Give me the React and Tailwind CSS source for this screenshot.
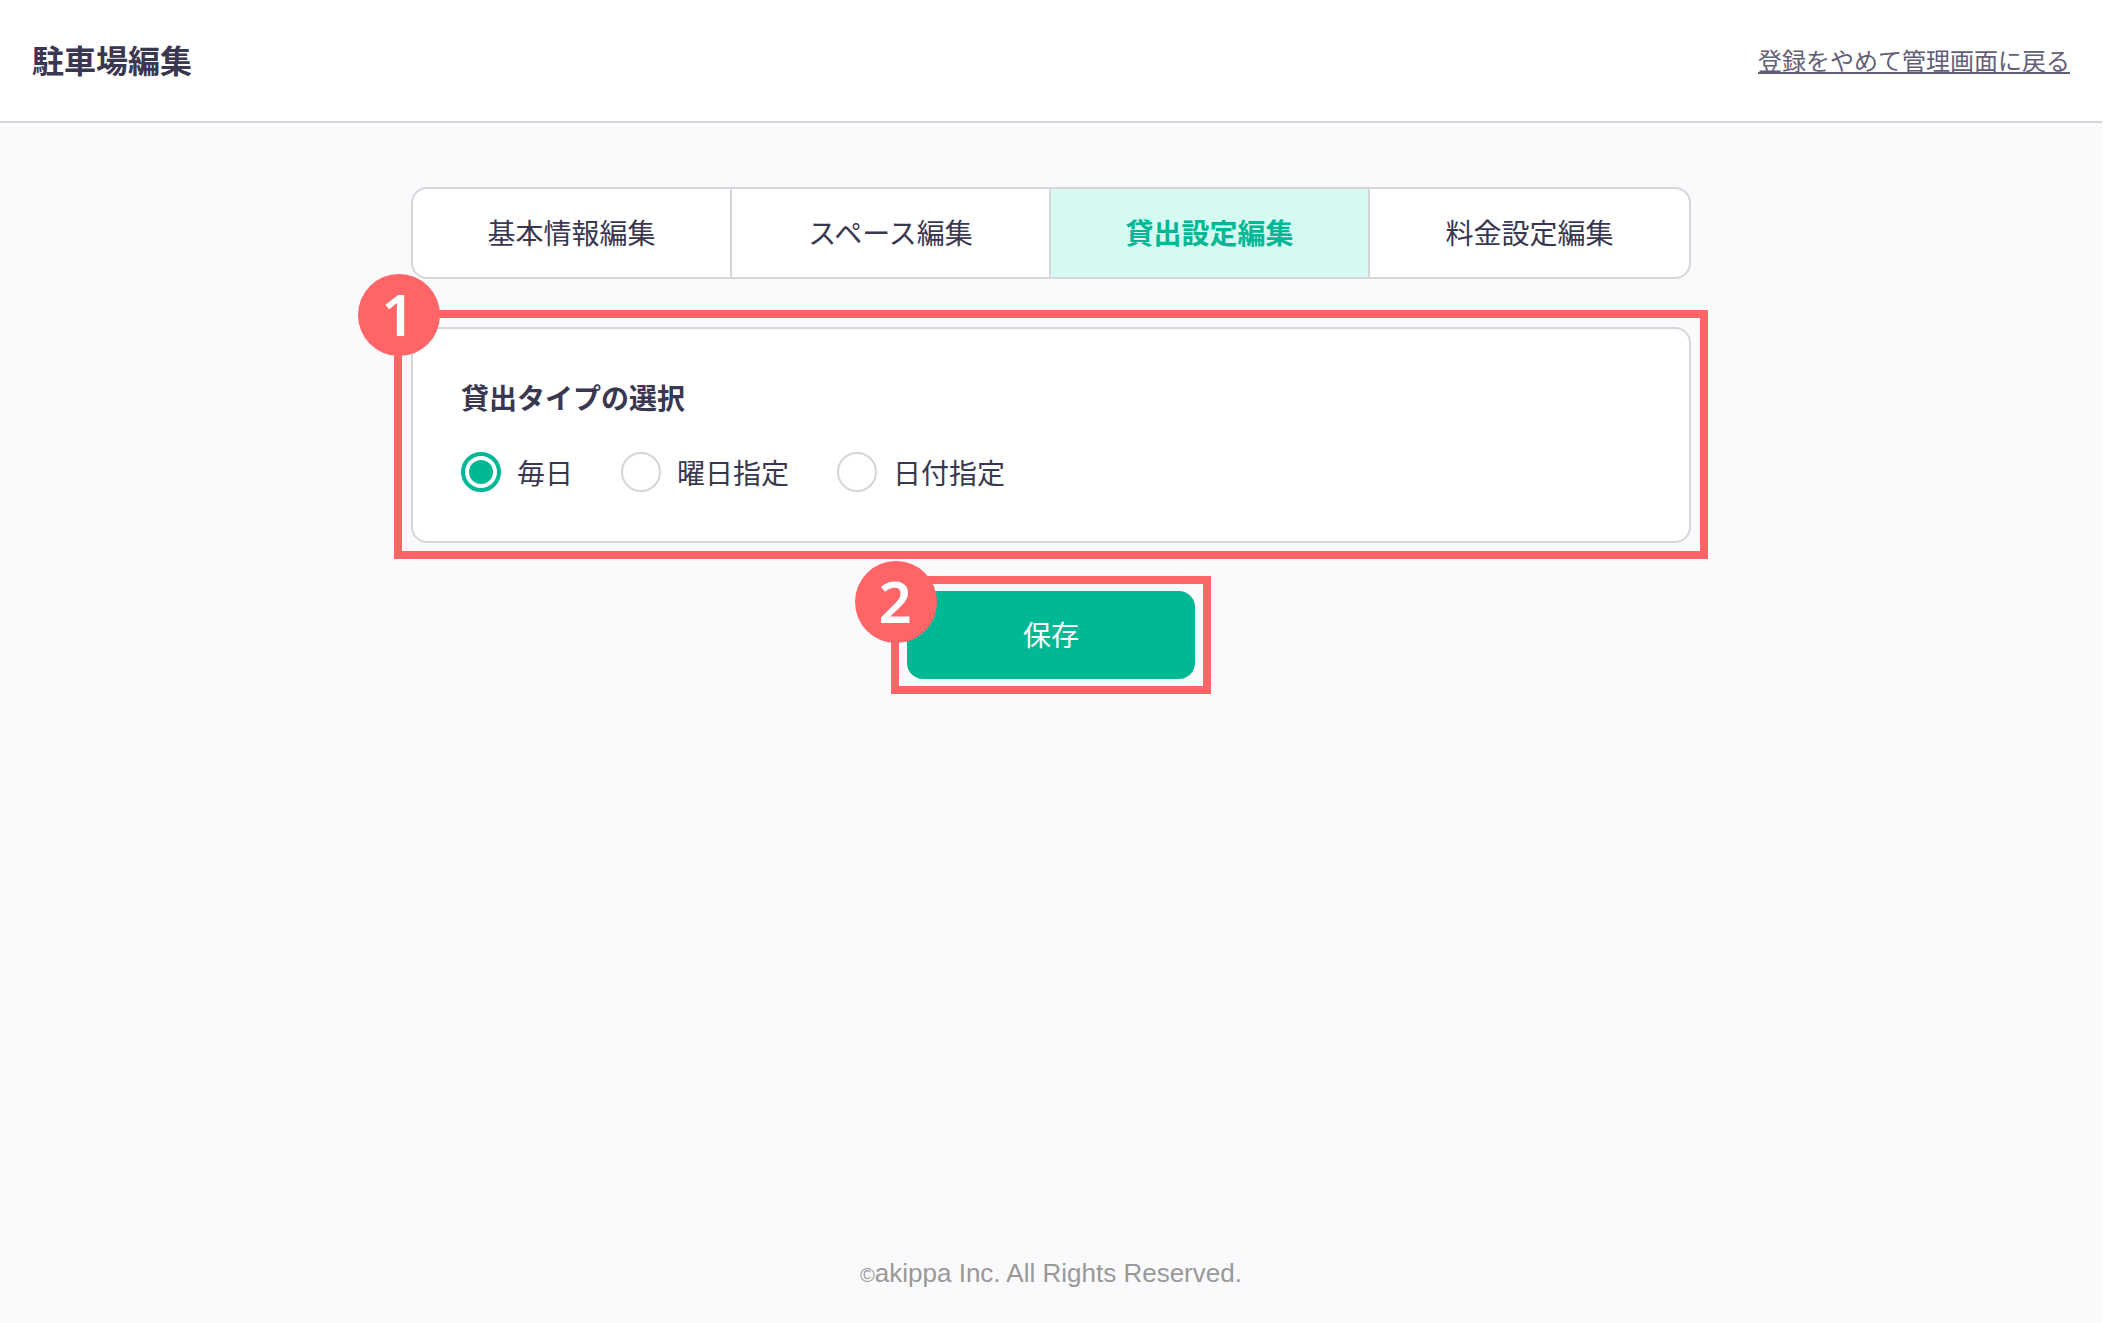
import { useState } from 'react';
import clsx from 'clsx';

const tabs = [
  { id: 'basic', label: '基本情報編集' },
  { id: 'space', label: 'スペース編集' },
  { id: 'rental', label: '貸出設定編集' },
  { id: 'price', label: '料金設定編集' },
];

const rentalTypes = [
  { value: 'everyday', label: '毎日' },
  { value: 'weekday', label: '曜日指定' },
  { value: 'date', label: '日付指定' },
];

// Red guide frame with a step number near its top left corner
const StepFrame = ({ number, className, badgeClassName }) => (
  <div className={clsx('pointer-events-none absolute border-8 border-[#ff6467]', className)}>
    <span
      className={clsx(
        "absolute -left-11 flex size-[82px] items-center justify-center rounded-full bg-[#ff6467] pr-0.5 pb-0.5 font-['Noto_Sans',sans-serif] text-[58px] leading-none font-semibold text-white",
        badgeClassName
      )}
    >
      {number}
    </span>
  </div>
);

const Header = () => (
  <header className="flex items-center justify-between border-b-2 border-[#d5d5da] bg-white px-8 pt-[35px] pb-[37px]">
    <h1 className="text-[32px] leading-[49px] font-bold">駐車場編集</h1>
    <a href="#admin" className="text-2xl text-[#615e77] underline decoration-2 underline-offset-2">
      登録をやめて管理画面に戻る
    </a>
  </header>
);

const TabNav = ({ current }) => (
  <nav className="grid grid-cols-4 overflow-hidden rounded-2xl border-2 border-[#d5d5da] bg-white">
    {tabs.map((tab) => (
      <a
        key={tab.id}
        href={`#${tab.id}`}
        aria-current={tab.id === current ? 'page' : undefined}
        className={clsx(
          'border-r-2 border-[#d5d5da] pt-[23px] pb-[25px] text-center text-[28px] leading-10 last:border-r-0',
          tab.id === current && 'bg-[#d5faf2] font-bold text-[#00b894]'
        )}
      >
        {tab.label}
      </a>
    ))}
  </nav>
);

export default function App() {
  const [rentalType, setRentalType] = useState('everyday');

  return (
    <div className="flex min-h-screen flex-col border-r border-white bg-[#fafafc] font-['Noto_Sans_CJK_JP',sans-serif] text-[#3a3751]">
      <Header />

      <main className="mx-auto w-full max-w-7xl pt-16 pb-12">
        <TabNav current="rental" />

        <form onSubmit={(e) => e.preventDefault()}>
          <div className="relative mt-12">
            <fieldset className="rounded-2xl border-2 border-[#d5d5da] bg-white p-12">
              <legend className="float-left w-full text-[28px] leading-10 font-bold">
                貸出タイプの選択
              </legend>
              <div className="clear-both flex gap-12 pt-[34px]">
                {rentalTypes.map((type) => (
                  <label key={type.value} className="flex items-center gap-4 text-[28px] leading-[42px]">
                    <input
                      type="radio"
                      name="rentalType"
                      value={type.value}
                      checked={rentalType === type.value}
                      onChange={() => setRentalType(type.value)}
                      className="size-10 appearance-none rounded-full border-2 border-[#d5d5da] bg-white bg-clip-content checked:border-4 checked:border-[#00b894] checked:bg-[#00b894] checked:p-1"
                    />
                    {type.label}
                  </label>
                ))}
              </div>
            </fieldset>
            <StepFrame number={1} className="-inset-x-[17px] -top-[17px] -bottom-4" badgeClassName="-top-11" />
          </div>

          <div className="relative mx-auto mt-12 w-72">
            <button
              type="submit"
              className="w-full rounded-2xl bg-[#00b894] pt-[23px] pb-[25px] text-[28px] leading-10 text-white"
            >
              保存
            </button>
            <StepFrame number={2} className="-inset-x-4 -inset-y-[15px]" badgeClassName="-top-[23px]" />
          </div>
        </form>
      </main>

      <footer className="mt-auto pb-[30px] text-center font-['Liberation_Sans',sans-serif] text-[26px] leading-10 text-[#999999]">
        <small className="text-[26px]">
          <span className="align-middle text-xl leading-none">©</span>akippa Inc. All Rights Reserved.
        </small>
      </footer>
    </div>
  );
}
